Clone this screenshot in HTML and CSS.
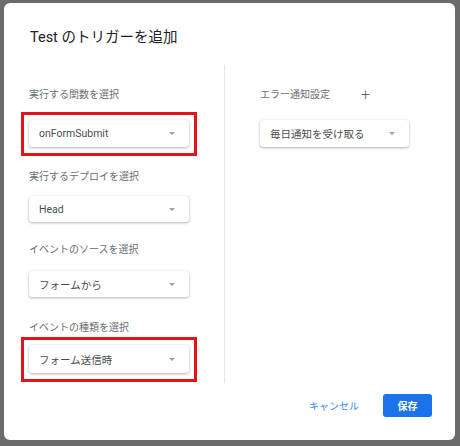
FILE: index.html
```html
<!DOCTYPE html>
<html lang="ja">
<head>
<meta charset="utf-8">
<title>トリガーを追加</title>
<link rel="stylesheet" href="styles.css">
</head>
<body>
<div class="dialog">
  <div class="title">Test のトリガーを追加</div>
  <div class="main">
    <div class="col-left">
      <div class="label l1">実行する関数を選択</div>
      <div class="select hl s1"><span>onFormSubmit</span><i class="arrow"></i></div>
      <div class="label l2">実行するデプロイを選択</div>
      <div class="select s2"><span>Head</span><i class="arrow"></i></div>
      <div class="label l3">イベントのソースを選択</div>
      <div class="select s3"><span>フォームから</span><i class="arrow"></i></div>
      <div class="label l4">イベントの種類を選択</div>
      <div class="select hl s4"><span>フォーム送信時</span><i class="arrow"></i></div>
    </div>
    <div class="divider"></div>
    <div class="col-right">
      <div class="label l1 err">エラー通知設定<span class="plus">+</span></div>
      <div class="select s1 wide"><span>毎日通知を受け取る</span><i class="arrow"></i></div>
    </div>
  </div>
  <div class="footer">
    <span class="cancel">キャンセル</span>
    <span class="save">保存</span>
  </div>
</div>
</body>
</html>
```
FILE: styles.css
```css
html, body {
  margin: 0;
  padding: 0;
}
body {
  width: 460px;
  height: 446px;
  background: #6b6b6b;
  font-family: Roboto, "Noto Sans CJK JP", sans-serif;
  overflow: hidden;
}
.dialog {
  box-sizing: border-box;
  margin: 3px 0 0 4px;
  width: 451px;
  height: 437px;
  background: #fff;
  border-radius: 6px;
  padding: 25px 23px 0 25px;
  display: flex;
  flex-direction: column;
}
.title {
  font-size: 14.5px;
  line-height: 20px;
  color: #202124;
  padding-left: 1px;
}
.main {
  display: flex;
  margin-top: 17px;
  height: 318px;
}
.col-left {
  width: 195px;
  display: flex;
  flex-direction: column;
  align-items: flex-start;
}
.divider {
  width: 1px;
  background: #e6e6e6;
}
.col-right {
  padding-left: 35px;
  display: flex;
  flex-direction: column;
  align-items: flex-start;
}
.label {
  font-size: 10px;
  line-height: 16px;
  color: #6a6e72;
}
.l1 { margin-top: 22px; }
.l2 { margin-top: 22px; }
.l3 { margin-top: 20px; }
.l4 { margin-top: 23px; }
.err { display: flex; align-items: center; }
.plus {
  margin-left: 31px;
  font-size: 16px;
  font-weight: 300;
  color: #666;
  line-height: 16px;
}
.select {
  position: relative;
  box-sizing: border-box;
  width: 160px;
  height: 27px;
  border-radius: 3px;
  background: #fff;
  box-shadow: 0 1px 3px rgba(0, 0, 0, 0.28), 0 0 1px rgba(0, 0, 0, 0.12);
  display: flex;
  align-items: center;
  justify-content: space-between;
  padding: 0 14px 0 10px;
  font-size: 10.5px;
  color: #4a4d50;
}
.wide { width: 149px; }
.s1 { margin-top: 17px; }
.s2 { margin-top: 11px; height: 26px; }
.s3 { margin-top: 13px; height: 26px; }
.s4 { margin-top: 9px; height: 28px; }
.hl::before {
  content: "";
  position: absolute;
  left: -8px;
  top: -8px;
  right: -8px;
  bottom: -9px;
  border: 3px solid #e3131c;
}
.arrow {
  width: 0;
  height: 0;
  border-left: 3.5px solid transparent;
  border-right: 3.5px solid transparent;
  border-top: 3.5px solid #a0a0a0;
}
.footer {
  display: flex;
  justify-content: flex-end;
  align-items: center;
  margin-top: 11px;
}
.cancel {
  font-size: 10px;
  color: #3b86ee;
  margin-right: 24px;
}
.save {
  width: 49px;
  height: 23px;
  border-radius: 3px;
  background: #1a73e8;
  color: #fff;
  font-size: 10px;
  font-weight: 700;
  display: flex;
  align-items: center;
  justify-content: center;
}
```
